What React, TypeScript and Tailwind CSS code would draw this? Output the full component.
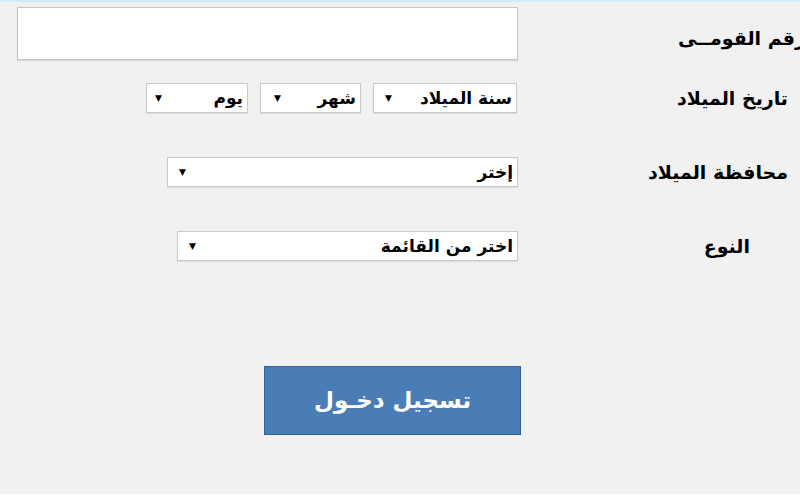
import type { ReactNode } from 'react'

const arabic = { fontFamily: '"DejaVu Sans", "Liberation Sans", sans-serif' }

function Caret() {
  return <span className="text-[9px] leading-none text-black">▼</span>
}

function FakeSelect({ label, className }: { label: string; className: string }) {
  return (
    <div
      dir="rtl"
      className={`h-[30px] bg-white border border-[#c9c9c9] shadow-[0_1px_1px_rgba(0,0,0,0.08)] flex items-center justify-between pr-[4px] ${className}`}
    >
      <span className="text-[17px] leading-none font-bold text-black">{label}</span>
      <Caret />
    </div>
  )
}

function Label({ children, className }: { children: ReactNode; className: string }) {
  return (
    <div dir="rtl" className={`text-[19px] font-bold text-black whitespace-nowrap ${className}`}>
      {children}
    </div>
  )
}

export default function App() {
  return (
    <div className="w-[800px] h-[500px] overflow-hidden bg-[#f1f1f1] flex flex-col" style={arabic}>
      <div className="h-[2px] bg-[#cfeef4]" />

      {/* رقم القومى */}
      <div className="flex items-center mt-[5px]">
        <div className="ml-[17px] w-[501px] h-[53px] bg-white border border-[#c4c4c4] shadow-[0_1px_1px_rgba(0,0,0,0.1)]" />
        <div className="flex-1 flex justify-end mr-[-6px] pt-[10px]">
          <Label className="">رقم القومــى</Label>
        </div>
      </div>

      {/* تاريخ الميلاد */}
      <div className="flex items-center mt-[23px]">
        <div className="ml-[146px] flex gap-[12px]">
          <FakeSelect label="يوم" className="w-[102px] pl-[8px]" />
          <FakeSelect label="شهر" className="w-[101px] pl-[13px]" />
          <FakeSelect label="سنة الميلاد" className="w-[144px] pl-[11px]" />
        </div>
        <div className="flex-1 flex justify-end pr-[12px]">
          <Label className="">تاريخ الميلاد</Label>
        </div>
      </div>

      {/* محافظة الميلاد */}
      <div className="flex items-center mt-[44px]">
        <FakeSelect label="إختر" className="ml-[167px] w-[351px] pl-[11px]" />
        <div className="flex-1 flex justify-end pr-[12px]">
          <Label className="">محافظة الميلاد</Label>
        </div>
      </div>

      {/* النوع */}
      <div className="flex items-center mt-[44px]">
        <FakeSelect label="اختر من القائمة" className="ml-[177px] w-[341px] pl-[11px]" />
        <div className="flex-1 flex justify-end pr-[50px]">
          <Label className="">النوع</Label>
        </div>
      </div>

      <div className="mt-[105px] ml-[264px]">
        <button
          type="button"
          className="w-[257px] h-[69px] bg-[#4a7db6] border border-[#33618f] text-white text-[23px] font-bold flex items-center justify-center"
          dir="rtl"
        >
          تسجيل دخـول
        </button>
      </div>

      <div className="mt-auto h-[6px] bg-white" />
    </div>
  )
}
